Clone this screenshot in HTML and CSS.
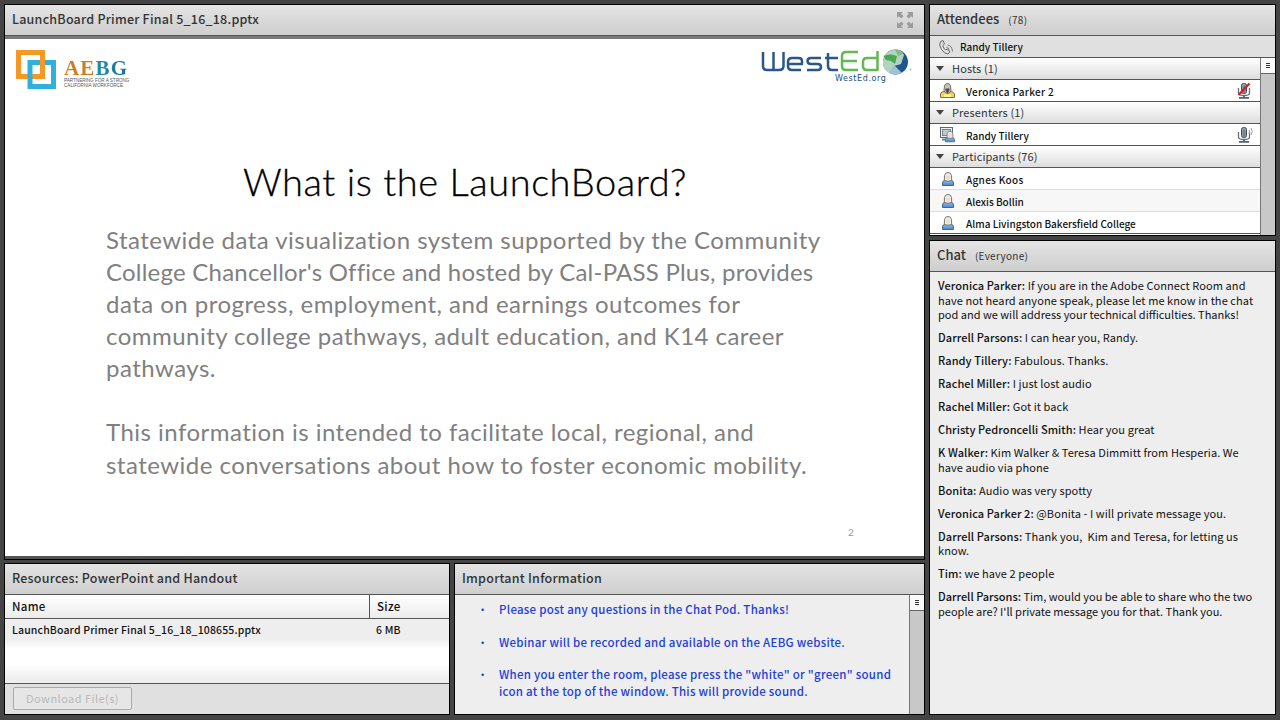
FILE: index.html
```html
<!DOCTYPE html>
<html lang="en">
<head>
    <meta charset="UTF-8">
    <meta name="viewport" content="width=device-width, initial-scale=1.0">
    <title>LaunchBoard Webinar</title>
    <link rel="stylesheet" href="styles.css">
</head>
<body>
    <!-- shared icon shapes -->
    <svg class="defs" width="0" height="0">
        <defs>
            <linearGradient id="shirt" x1="0" y1="0" x2="0" y2="1">
                <stop offset="0" stop-color="#8fbdf0"/>
                <stop offset="1" stop-color="#4585cf"/>
            </linearGradient>
            <symbol id="person" viewBox="0 0 14 16">
                <path d="M1.500 14.500V12Q1.500 9.500 4 9.500H10Q12.500 9.500 12.500 12V14.500Z" fill="url(#shirt)" stroke="#46648c"/>
                <path d="M3.300 9.500L3.500 4.500Q4 1.500 7 1.500T10.500 4.500L10.700 9.500Q7 11 3.300 9.500Z" fill="#f1efec" stroke="#77736d"/>
                <path d="M4.800 5Q7 3 9.200 5V7.500Q7 10 4.800 7.500Z" fill="#ecdccd"/>
            </symbol>
            <symbol id="mic" viewBox="0 0 18 18">
                <rect x="5.500" y="1.500" width="5" height="10" rx="2" fill="#9ca5ad" stroke="#3e4a55"/>
                <path d="M6.500 5H10M6.500 7H10M6.500 9H10M8 3V11" stroke="#5d6a76" stroke-width=".7"/>
                <path d="M2.500 6V11Q2.500 13.500 8 13.500T13.500 11V6" fill="none" stroke="#66717c" stroke-width="1.300"/>
                <path d="M8 13.500V16M3 15.800H13" stroke="#56616c" stroke-width="1.800"/>
            </symbol>
        </defs>
    </svg>

    <div class="room">
        <div class="left">
            <section class="pod share">
                <header class="pod-title">
                    <h2>LaunchBoard Primer Final 5_16_18.pptx</h2>
                    <svg class="expand" width="18" height="18" viewBox="0 0 18 18">
                        <path d="M1 1H7L5.200 2.800 7.500 5.200 5.200 7.500 2.800 5.200 1 7ZM17 1V7L15.200 5.200 12.800 7.500 10.500 5.200 12.800 2.800 11 1ZM1 17V11L2.800 12.800 5.200 10.500 7.500 12.800 5.200 15.200 7 17ZM17 17H11L12.800 15.200 10.500 12.800 12.800 10.500 15.200 12.800 17 11Z" fill="#9c9c9c"/>
                    </svg>
                </header>
                <div class="slide">
                    <div class="logos">
                        <div class="aebg">
                            <svg width="40" height="39" viewBox="0 0 40 39">
                                <rect x="2.500" y="2.500" width="24" height="24" fill="none" stroke="#f49a24" stroke-width="5"/>
                                <rect x="14" y="12.500" width="23.500" height="24" fill="none" stroke="#30b0da" stroke-width="5"/>
                                <path d="M26.500 9V19" stroke="#f49a24" stroke-width="5"/>
                            </svg>
                            <div class="aebg-text">
                                <b>AEBG</b>
                                <small>PARTNERING FOR A STRONG<br>CALIFORNIA WORKFORCE</small>
                            </div>
                        </div>
                        <div class="wested">
                            <svg width="152" height="36" viewBox="0 0 152 36">
                                <g fill="none" stroke-width="2.500" stroke-linejoin="round">
                                    <path stroke="#2a5788" d="M2 3V17Q2 21 6 21H18Q22.500 21 22.500 17V3M12.500 3V21M27 15H41V12Q41 9 37.500 9H31Q27 9 27 13V17Q27 21 31 21H40M60 9H50Q46.500 9 46.500 12T50 15H56.500Q60 15 60 18T56.500 21H46M67 4V17Q67 21 71 21H77M64 9H77"/>
                                    <path stroke="#62b952" d="M97 3H85Q81 3 81 7V17Q81 21 85 21H97M81 12H96M116.500 2V21H106Q102 21 102 17V13Q102 9 106 9H116"/>
                                </g>
                                <circle cx="134.500" cy="13" r="12.500" fill="#1f5690"/>
                                <path d="M122 12Q123 2 134 .5Q141 1 143 6L140 15 133 17 129 24Q121 21 122 12Z" fill="#b3d3c0"/>
                                <path d="M122.500 7Q129 4 136 7L134 15 130 12 125 11Z" fill="#48a851"/>
                                <path d="M133 16L141 24Q134 27 128 24Z" fill="#a3bfd2"/>
                                <path d="M134 .5Q140 1 142 5L137 7Z" fill="#86b98c"/>
                                <circle cx="149.500" cy="20.500" r="1" fill="#9cb5cc"/>
                            </svg>
                            <span>WestEd.org</span>
                        </div>
                    </div>
                    <h1>What is the LaunchBoard?</h1>
                    <p>Statewide data visualization system supported by the Community<br>
                    <span class="tight">College Chancellor's Office and hosted by Cal-PASS Plus, provides</span><br>
                    data on progress, employment, and earnings outcomes for<br>
                    community college pathways, adult education, and K14 career<br>
                    pathways.</p>
                    <p>This information is intended to facilitate local, regional, and<br>
                    statewide conversations about how to foster economic mobility.</p>
                    <div class="page-number">2</div>
                </div>
            </section>

            <div class="bottom">
                <section class="pod files">
                    <header class="pod-title"><h2>Resources: PowerPoint and Handout</h2></header>
                    <div class="file-row file-head"><span>Name</span><span>Size</span></div>
                    <div class="file-list">
                        <div class="file-row"><span>LaunchBoard Primer Final 5_16_18_108655.pptx</span><span>6 MB</span></div>
                    </div>
                    <footer><button disabled>Download File(s)</button></footer>
                </section>

                <section class="pod info">
                    <header class="pod-title"><h2>Important Information</h2></header>
                    <div class="scroll-area">
                        <ul>
                            <li>Please post any questions in the Chat Pod. Thanks!</li>
                            <li>Webinar will be recorded and available on the AEBG website.</li>
                            <li>When you enter the room, please press the "white" or "green" sound<br>icon at the top of the window. This will provide sound.</li>
                        </ul>
                        <div class="scrollbar"><i></i></div>
                    </div>
                </section>
            </div>
        </div>

        <div class="right">
            <section class="pod attendees">
                <header class="pod-title"><h2>Attendees</h2><span class="sub">(78)</span></header>
                <div class="speaking">
                    <svg width="16" height="16" viewBox="0 0 16 16">
                        <path d="M2.500 2.500L5 1.500 6.500 5 4.800 6.500Q5.500 9.500 7.500 11L9.500 10 12 13 10 15Q6.500 15 3.500 10.500T2.500 2.500Z" fill="#dedede" stroke="#6b6b6b"/>
                        <path d="M8.500 8.500Q11 8.500 11 11.500M9.500 6Q14 6.500 14.500 12.500" fill="none" stroke="#777"/>
                    </svg>
                    <span>Randy Tillery</span>
                </div>
                <div class="scroll-area">
                    <div class="people">
                        <div class="group">Hosts (1)</div>
                        <div class="person wide">
                            <svg width="18" height="18" viewBox="0 0 18 18">
                                <path d="M1.500 15.500V12Q2 9.500 5 9.500H11.500Q14.500 9.500 15.500 12V15.500Z" fill="#ecd45e" stroke="#82713a"/>
                                <path d="M5 8.500L5.500 4Q6 1.500 8.500 1.500T11.500 4L12 8.500 10.500 11H6.500Z" fill="#c7c1bb" stroke="#756e68"/>
                                <path d="M6.500 6.500H10.500V8L8.500 12 6.500 8Z" fill="#51483e"/>
                                <path d="M5 12.500H12V15H5Z" fill="#fff1a0"/>
                            </svg>
                            <span>Veronica Parker 2</span>
                            <svg class="mic" width="18" height="18" viewBox="0 0 18 18">
                                <use href="#mic"/>
                                <path d="M2.500 13L13.500 1.500" stroke="#d8202a" stroke-width="2.400"/>
                            </svg>
                        </div>
                        <div class="group">Presenters (1)</div>
                        <div class="person">
                            <svg width="18" height="18" viewBox="0 0 18 18">
                                <rect x="1.500" y="1.500" width="12" height="10" fill="#eee" stroke="#5c6770"/>
                                <rect x="3.500" y="3.500" width="8" height="6" fill="#b9cbd7" stroke="#78858e"/>
                                <path d="M3 13.500H8" stroke="#77828b" stroke-width="2"/>
                                <use href="#person" x="5" y="4" width="12" height="13"/>
                            </svg>
                            <span>Randy Tillery</span>
                            <svg class="mic" width="18" height="18" viewBox="0 0 18 18">
                                <use href="#mic"/>
                                <path d="M13 4Q14.500 6 13 8M15 2Q17.500 5.500 15 9" fill="none" stroke="#999"/>
                            </svg>
                        </div>
                        <div class="group">Participants (76)</div>
                        <div class="person wide light"><svg width="18" height="16"><use href="#person" x="2" width="14" height="16"/></svg><span>Agnes Koos</span></div>
                        <div class="person light alt"><svg width="18" height="16"><use href="#person" x="2" width="14" height="16"/></svg><span>Alexis Bollin</span></div>
                        <div class="person"><svg width="18" height="16"><use href="#person" x="2" width="14" height="16"/></svg><span>Alma Livingston Bakersfield College</span></div>
                    </div>
                    <div class="scrollbar"><i></i></div>
                </div>
            </section>

            <section class="pod chat">
                <header class="pod-title"><h2>Chat</h2><span class="sub">(Everyone)</span></header>
                <div class="messages">
                    <p><b>Veronica Parker:</b> If you are in the Adobe Connect Room and<br>have not heard anyone speak, please let me know in the chat<br><span class="tight">pod and we will address your technical difficulties. Thanks!</span></p>
                    <p><b>Darrell Parsons:</b> I can hear you, Randy.</p>
                    <p><b>Randy Tillery:</b> Fabulous. Thanks.</p>
                    <p><b>Rachel Miller:</b> I just lost audio</p>
                    <p><b>Rachel Miller:</b> Got it back</p>
                    <p><b>Christy Pedroncelli Smith:</b> Hear you great</p>
                    <p><b>K Walker:</b> Kim Walker &amp; Teresa Dimmitt from Hesperia. We<br>have audio via phone</p>
                    <p><b>Bonita:</b> Audio was very spotty</p>
                    <p><b>Veronica Parker 2:</b> @Bonita - I will private message you.</p>
                    <p><b>Darrell Parsons:</b> Thank you,&nbsp; Kim and Teresa, for letting us<br>know.</p>
                    <p><b>Tim:</b> we have 2 people</p>
                    <p class="tight"><b>Darrell Parsons:</b> Tim, would you be able to share who the two<br>people are? I'll private message you for that. Thank you.</p>
                </div>
            </section>
        </div>
    </div>
</body>
</html>
```
FILE: styles.css
```css
* {
    box-sizing: border-box;
}
body {
    margin: 0;
    background: #444;
    font-family: "Noto Sans CJK SC", "Noto Sans", sans-serif;
    font-size: 11px;
    color: #111;
    white-space: nowrap;
    overflow: hidden;
}
h1, h2, p, ul {
    margin: 0;
    padding: 0;
}
.defs {
    position: absolute;
}
.room {
    display: flex;
    gap: 4px;
    height: 720px;
    padding: 4px 4px 5px;
}
.left, .right {
    display: flex;
    flex-direction: column;
    gap: 3px;
}
.left {
    width: 921px;
}
.right {
    width: 347px;
    gap: 4px;
}
.pod {
    display: flex;
    flex-direction: column;
    border: 1px solid #000;
    background: #eee;
    overflow: hidden;
}
.pod-title {
    display: flex;
    align-items: center;
    flex: none;
    height: 31px;
    padding: 0 7px;
    border-bottom: 1px solid #555;
    background: linear-gradient(#e4e4e4, #cecece);
}
.pod-title h2 {
    font-size: 12.5px;
    font-weight: 500;
    line-height: 28px;
    color: #333;
    letter-spacing: 0.23px;
    padding-bottom: 2px;
}
.sub {
    margin-left: 9px;
    padding-bottom: 1px;
    font-size: 10px;
    color: #333;
    letter-spacing: 0.3px;
}

/* slide */
.share {
    height: 556px;
}
.expand {
    margin-left: auto;
    margin-right: 3px;
}
.slide {
    flex: 1;
    background: #fff;
    border-top: 3px solid #7a7a7a;
    border-bottom: 3px solid #555;
    padding: 11px 11px 0;
    font-family: Lato, sans-serif;
    font-variant-ligatures: none;
}
.logos {
    display: flex;
    justify-content: space-between;
    height: 40px;
}
.aebg {
    display: flex;
    gap: 8px;
}
.aebg-text {
    padding-top: 8px;
}
.aebg b {
    display: block;
    font: bold 21px/21px "Liberation Serif", serif;
    letter-spacing: 1.2px;
    background: linear-gradient(90deg, #cf7d21 0 47%, #218eac 50%, #1a6c9b);
    -webkit-background-clip: text;
    background-clip: text;
    color: transparent;
}
.aebg small {
    display: block;
    font: 4.6px/4.8px "Liberation Sans", sans-serif;
    color: #555;
}
.wested {
    display: flex;
    flex-direction: column;
    width: 152px;
}
.wested svg {
    margin-top: -1px;
    height: 36px;
}
.wested span {
    margin: -11px 0 0 74px;
    font: 8px/9px "DejaVu Sans", sans-serif;
    letter-spacing: 0.6px;
    color: #1f4f82;
}
.slide h1 {
    margin: 66px 0 18px 227px;
    font-size: 38px;
    line-height: 50px;
    font-weight: 300;
    letter-spacing: 0.55px;
    color: #000;
    -webkit-text-stroke: 0.3px #000;
}
.slide p {
    margin: 0 0 32px 90px;
    font-size: 24px;
    line-height: 32.1px;
    letter-spacing: 0.47px;
    color: #808080;
}
.slide .tight {
    letter-spacing: 0.22px;
}
.page-number {
    margin: 13px 0 0 832px;
    font-size: 10px;
    color: #999;
}
/* the last paragraph's margin collapses into the page number */
.slide p + .page-number {
    padding-top: 13px;
}

/* bottom row */
.bottom {
    display: flex;
    gap: 4px;
    height: 152px;
}
.files {
    width: 446px;
    font-weight: 500;
}
.file-row {
    display: grid;
    grid-template-columns: 364px 1fr;
    height: 22px;
    line-height: 21px;
    font-size: 10.5px;
    letter-spacing: 0.15px;
}
.file-row span {
    padding-left: 7px;
}
.file-head {
    height: 24px;
    line-height: 23px;
    background: linear-gradient(#fff, #ececec);
    border-bottom: 1px solid #555;
    font-size: 11.5px;
    letter-spacing: 0.3px;
}
.file-head span + span {
    border-left: 1px solid #555;
}
.file-list {
    flex: 1;
    background: linear-gradient(#eee 20px, #fff 30px 45px, #eee 60px);
}
.files footer {
    height: 31px;
    border-top: 1px solid #555;
    background: #e0e0e0;
    padding: 3px 8px;
}
.files button {
    width: 119px;
    height: 23px;
    padding: 0 0 1px;
    border: 1px solid #aaa;
    border-radius: 2px;
    background: #e6e6e6;
    font: inherit;
    font-weight: 400;
    color: #b8b8b8;
    letter-spacing: 0.45px;
}
.info {
    width: 471px;
}
.scroll-area {
    display: flex;
    flex: 1;
    min-height: 0;
}
.scrollbar {
    flex: none;
    width: 15px;
    border-left: 1px solid #777;
    background: #c8c8c8;
}
.scrollbar i {
    display: block;
    height: 16px;
    border-bottom: 1px solid #666;
    background: linear-gradient(#333, #333) 5px 5px / 4px 1px no-repeat,
                linear-gradient(#333, #333) 5px 7px / 4px 1px no-repeat,
                linear-gradient(#333, #333) 5px 9px / 4px 1px no-repeat, #fafafa;
}
.info ul {
    flex: 1;
    list-style: none;
    padding: 6px 0 0 44px;
    font-size: 11.5px;
    font-weight: 500;
    line-height: 17px;
    color: #2340d6;
    letter-spacing: 0.25px;
}
.info li {
    margin-bottom: 15.5px;
}
.info li::before {
    content: "•";
    float: left;
    margin-left: -18px;
    font: 9px/18px "Liberation Sans", sans-serif;
}

/* attendees */
.attendees {
    height: 232px;
}
.attendees .pod-title h2, .chat .pod-title h2 {
    font-size: 13px;
    letter-spacing: 0;
}
.speaking {
    display: flex;
    align-items: center;
    gap: 6px;
    flex: none;
    height: 22px;
    padding-left: 8px;
    border-bottom: 1px solid #555;
    background: #e0e0e0;
    font-size: 10px;
    font-weight: 500;
}
.people {
    flex: 1;
    background: #fff;
}
.group {
    display: flex;
    align-items: center;
    height: 22px;
    padding: 0 0 1px 5px;
    border-bottom: 1px solid #555;
    background: linear-gradient(#fff, #dedede);
    color: #333;
    letter-spacing: 0.12px;
}
.group::before {
    content: "";
    margin: 1px 8px 0 1px;
    border: 4px solid transparent;
    border-top: 5px solid #444;
    border-bottom: 0;
}
.person {
    display: flex;
    align-items: center;
    gap: 9px;
    height: 22px;
    padding-left: 9px;
    border-bottom: 1px solid #555;
    font-size: 10px;
    font-weight: 500;
}
.person span {
    padding-top: 1px;
}
.person.wide {
    letter-spacing: 0.3px;
}
.person.light {
    border-bottom-color: #ddd;
}
.person.alt {
    background: #f7f7f7;
}
.person .mic {
    margin: 0 6px 0 auto;
}

/* chat */
.chat {
    flex: 1;
}
.messages {
    padding: 6px 8px;
    font-size: 11px;
    line-height: 14.5px;
    letter-spacing: 0.08px;
}
.messages p {
    margin-bottom: 8.5px;
}
.messages b {
    font-weight: 500;
}
.messages .tight {
    letter-spacing: 0;
}
```
